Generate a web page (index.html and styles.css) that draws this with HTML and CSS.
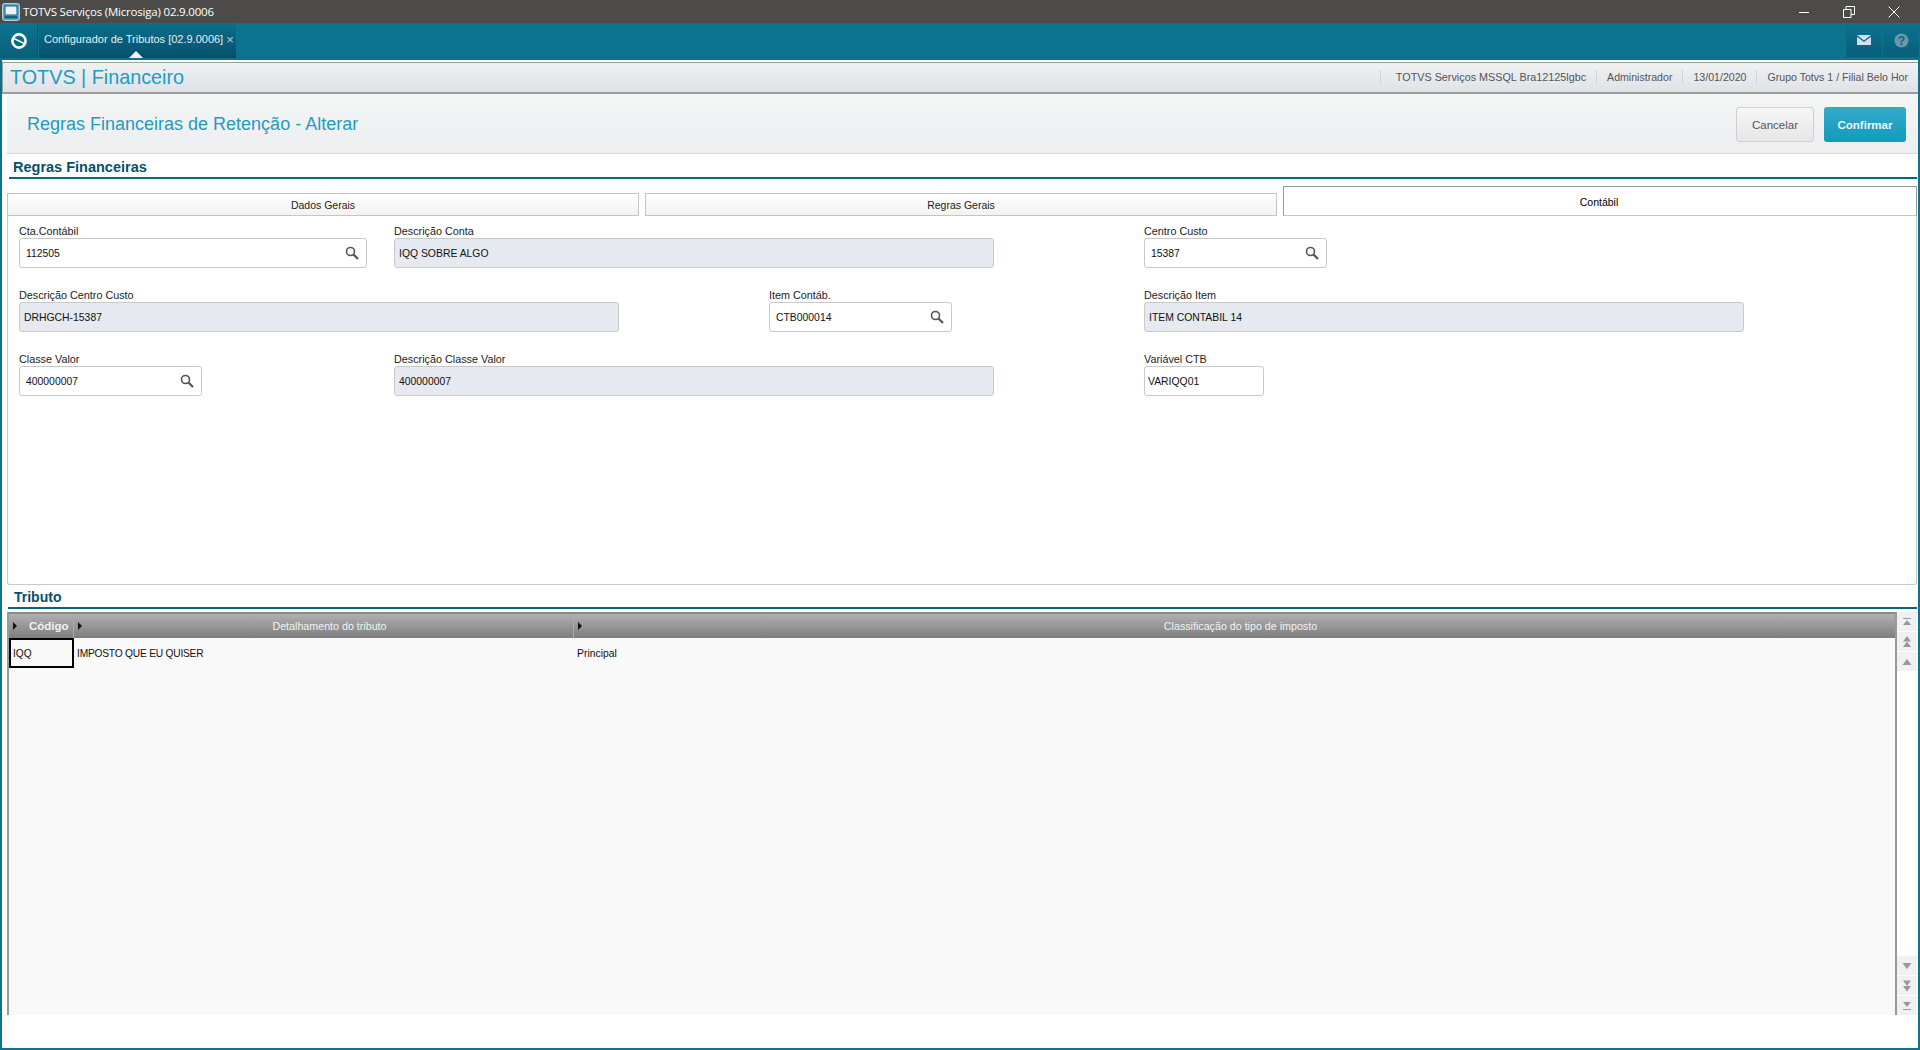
FILE: index.html
```html
<!DOCTYPE html>
<html lang="pt-BR">
<head>
<meta charset="utf-8">
<title>TOTVS Serviços (Microsiga) 02.9.0006</title>
<link rel="stylesheet" href="styles.css">
</head>
<body>
<div class="window">
  <header class="titlebar">
    <div class="title-left">
      <svg class="app-icon" width="18" height="18" viewBox="0 0 18 18"><rect x=".5" y=".5" width="17" height="17" rx="2" fill="#5fa9c4" stroke="#a9d3e0"/><rect x="3" y="3" width="12" height="9" fill="#e8f2f6" stroke="#1d5f7a"/><rect x="2.5" y="13" width="13" height="2.5" fill="#1d5f7a"/></svg>
      <span>TOTVS Serviços (Microsiga) 02.9.0006</span>
    </div>
    <div class="win-controls">
      <svg width="12" height="12" viewBox="0 0 12 12"><path d="M1 6.500h10" stroke="#fff" fill="none"/></svg>
      <svg width="12" height="12" viewBox="0 0 12 12"><path d="M.5 3.500h7.500v8h-7.500zM3 3.500v-3h8.500v8h-3.500" stroke="#fff" fill="none"/></svg>
      <svg width="12" height="12" viewBox="0 0 12 12"><path d="M.5.500l11 11M11.500.500l-11 11" stroke="#fff" fill="none"/></svg>
    </div>
  </header>
  <nav class="tabbar">
    <div class="home-btn">
      <svg width="18" height="18" viewBox="0 0 18 18"><circle cx="9" cy="9" r="6.600" fill="none" stroke="#fff" stroke-width="2.600"/><path d="M4 6.500l10 5" stroke="#fff" stroke-width="1.500"/></svg>
    </div>
    <div class="app-tab">
      <span>Configurador de Tributos [02.9.0006]</span><span class="tab-close">×</span>
      <i class="tab-caret"></i>
    </div>
    <div class="tabbar-right">
      <div class="bar-btn"><svg width="14" height="10" viewBox="0 0 14 10"><path d="M0 0h14L7 5.500z" fill="#d5e3e9"/><path d="M0 1.800l7 5.200 7-5.200V10H0z" fill="#d5e3e9"/></svg></div>
      <div class="bar-btn"><svg width="15" height="15" viewBox="0 0 15 15"><circle cx="7.500" cy="7.500" r="7" fill="#6e97a9"/><text x="7.500" y="11.500" class="help-mark" text-anchor="middle">?</text></svg></div>
    </div>
  </nav>
  <div class="content">
    <div class="module-bar">
      <div class="module-name">TOTVS | Financeiro</div>
      <ul class="module-info">
        <li>TOTVS Serviços MSSQL Bra12125lgbc</li>
        <li>Administrador</li>
        <li>13/01/2020</li>
        <li>Grupo Totvs 1 / Filial Belo Hor</li>
      </ul>
    </div>
    <div class="page-head">
      <h1>Regras Financeiras de Retenção - Alterar</h1>
      <div class="actions">
        <button class="btn btn-cancel">Cancelar</button>
        <button class="btn btn-confirm">Confirmar</button>
      </div>
    </div>
    <h2 class="section-title first">Regras Financeiras</h2>
    <div class="tabs">
      <div class="tab">Dados Gerais</div>
      <div class="tab">Regras Gerais</div>
      <div class="tab active">Contábil</div>
    </div>
    <section class="panel">
      <div class="form-grid">
        <div class="field"><label>Cta.Contábil</label><div class="input w348"><span>112505</span><svg class="lens" viewBox="0 0 14 14"><circle cx="5.500" cy="5.500" r="4" fill="none" stroke="#555" stroke-width="1.600"/><path d="M8.500 8.500l4.500 4.500" stroke="#555" stroke-width="2.200"/></svg></div></div>
        <div class="field span2"><label>Descrição Conta</label><div class="input ro w600"><span>IQQ SOBRE ALGO</span></div></div>
        <div class="field"><label>Centro Custo</label><div class="input w183"><span>15387</span><svg class="lens" viewBox="0 0 14 14"><circle cx="5.500" cy="5.500" r="4" fill="none" stroke="#555" stroke-width="1.600"/><path d="M8.500 8.500l4.500 4.500" stroke="#555" stroke-width="2.200"/></svg></div></div>

        <div class="field span2"><label>Descrição Centro Custo</label><div class="input ro w600"><span>DRHGCH-15387</span></div></div>
        <div class="field"><label>Item Contáb.</label><div class="input w183"><span>CTB000014</span><svg class="lens" viewBox="0 0 14 14"><circle cx="5.500" cy="5.500" r="4" fill="none" stroke="#555" stroke-width="1.600"/><path d="M8.500 8.500l4.500 4.500" stroke="#555" stroke-width="2.200"/></svg></div></div>
        <div class="field"><label>Descrição Item</label><div class="input ro w600"><span>ITEM CONTABIL 14</span></div></div>

        <div class="field"><label>Classe Valor</label><div class="input w183"><span>400000007</span><svg class="lens" viewBox="0 0 14 14"><circle cx="5.500" cy="5.500" r="4" fill="none" stroke="#555" stroke-width="1.600"/><path d="M8.500 8.500l4.500 4.500" stroke="#555" stroke-width="2.200"/></svg></div></div>
        <div class="field span2"><label>Descrição Classe Valor</label><div class="input ro w600"><span>400000007</span></div></div>
        <div class="field"><label>Variável CTB</label><div class="input plain w120"><span>VARIQQ01</span></div></div>
      </div>
    </section>
    <h2 class="section-title second">Tributo</h2>
    <div class="grid-box">
      <div class="grid-main">
        <div class="grid-head">
          <div class="th th-code"><i class="arrow"></i><span>Código</span></div>
          <div class="th th-desc"><i class="arrow"></i><span>Detalhamento do tributo</span></div>
          <div class="th th-class"><i class="arrow"></i><span>Classificação do tipo de imposto</span></div>
        </div>
        <div class="grid-row">
          <div class="td td-code">IQQ</div>
          <div class="td td-desc">IMPOSTO QUE EU QUISER</div>
          <div class="td td-class">Principal</div>
        </div>
      </div>
      <div class="scrollbar">
        <div class="scroll-group">
          <div class="sbtn"><svg width="12" height="10" viewBox="0 0 12 10"><path d="M2 1h8v1H2zM6 3l4 5H2z" fill="#999"/></svg></div>
          <div class="sbtn"><svg width="12" height="12" viewBox="0 0 12 12"><path d="M6 0l4 5.500H2zM6 5.500l4 5.500H2z" fill="#999"/></svg></div>
          <div class="sbtn"><svg width="12" height="8" viewBox="0 0 12 8"><path d="M6 1l4.500 6h-9z" fill="#999"/></svg></div>
        </div>
        <div class="scroll-group">
          <div class="sbtn"><svg width="12" height="8" viewBox="0 0 12 8"><path d="M6 7L1.500 1h9z" fill="#999"/></svg></div>
          <div class="sbtn"><svg width="12" height="12" viewBox="0 0 12 12"><path d="M6 6L2 .5h8zM6 11.500L2 6h8z" fill="#999"/></svg></div>
          <div class="sbtn"><svg width="12" height="10" viewBox="0 0 12 10"><path d="M6 6L2 1h8zM2 8h8v1H2z" fill="#999"/></svg></div>
        </div>
      </div>
    </div>
  </div>
</div>
</body>
</html>
```
FILE: styles.css
```css
* { box-sizing: border-box; }
html, body { margin: 0; padding: 0; height: 100%; overflow: hidden; }
body { font-family: "Liberation Sans", Arial, sans-serif; font-size: 11px; color: #111; background: #fff; }
.window { height: 1050px; display: flex; flex-direction: column; }

.titlebar { height: 23px; background: #4d4b49; color: #fff; display: flex; justify-content: space-between; align-items: center; flex: none; }
.title-left { display: flex; align-items: center; gap: 3px; padding-left: 2px; font-size: 11.500px; font-family: "Open Sans", "Liberation Sans", sans-serif; letter-spacing: -.2px; }
.app-icon { display: block; }
.win-controls { display: flex; align-items: center; gap: 33px; padding-right: 20px; }
.win-controls svg { display: block; }

.tabbar { height: 37px; background: #0b7290; display: flex; flex: none; align-items: stretch; }
.home-btn { width: 38px; height: 35px; background: linear-gradient(#0c7391, #095f79); border-right: 1px solid #0a5a72; display: flex; align-items: center; justify-content: center; }
.app-tab { position: relative; width: 197px; height: 35px; margin-left: 1px; background: linear-gradient(#0b6f8c, #06506a); color: #e4eef2; font-size: 11px; display: flex; align-items: center; padding: 0 0 3px 5px; white-space: nowrap; }
.tab-close { margin-left: 3px; color: #b9cdd6; font-size: 13px; }
.tab-caret { position: absolute; left: 90px; bottom: 0; border-left: 7px solid transparent; border-right: 7px solid transparent; border-bottom: 7px solid #f0f2f4; }
.tabbar-right { margin-left: auto; display: flex; gap: 1px; padding-right: 1px; }
.bar-btn { width: 36px; height: 34px; background: linear-gradient(#0b7290, #095f79); display: flex; align-items: center; justify-content: center; }
.bar-btn svg { display: block; }
.help-mark { font: bold 12px "Liberation Sans", sans-serif; fill: #0b6581; }

.content { flex: 1; min-height: 0; display: flex; flex-direction: column; border: 2px solid #0b7290; border-top: 0; padding-top: 2px; background: #fff; }

.module-bar { height: 32px; flex: none; display: flex; justify-content: space-between; align-items: center; background: linear-gradient(#eff1f3, #dfe2e7); border: 1px solid #9c9c9c; border-width: 1px 0 2px 1px; }
.module-name { font-size: 19.800px; color: #1d9cc2; padding-left: 7px; }
.module-info { display: flex; list-style: none; margin: 0 0 1px; padding: 0 10px 0 0; font-size: 10.600px; color: #555; }
.module-info li { padding: 0 10px; border-left: 1px solid #cfd3d8; line-height: 14px; white-space: nowrap; }
.module-info li:first-child { padding-left: 15px; font-size: 10.800px; }
.module-info li:last-child { padding-right: 0; }

.page-head { height: 60px; flex: none; margin-left: 5px; display: flex; justify-content: space-between; align-items: center; background: linear-gradient(#f4f5f5, #eceeef); border-bottom: 1px solid #d8d8d8; padding: 0 12px 0 20px; }
.page-head h1 { margin: 2px 0 0; font-weight: normal; font-size: 18px; color: #1d9cc2; }
.actions { display: flex; gap: 10px; margin-top: 2px; }
.btn { height: 35px; border-radius: 3px; font: 11.500px "Liberation Sans", sans-serif; padding: 0; }
.btn-cancel { width: 78px; color: #555; background: linear-gradient(#f6f6f6, #e6e6e6); border: 1px solid #cfcfcf; }
.btn-confirm { width: 82px; color: #eef7fa; font-weight: bold; background: linear-gradient(#35aac8, #129bbd); border: 0; }

.section-title { margin: 0; flex: none; font-size: 14.500px; font-weight: bold; color: #06506a; border-bottom: 2px solid #06677f; margin-right: 1px; }
.section-title.first { height: 25px; margin-left: 7px; padding: 4px 0 0 4px; line-height: 18px; }
.section-title.second { height: 24px; margin-left: 6px; padding: 3px 0 0 6px; line-height: 18px; font-size: 14px; }

.tabs { height: 37px; margin: 0 1px 0 5px; flex: none; display: flex; align-items: flex-end; gap: 6px; }
.tab { flex: 1 1 0; height: 23px; text-align: center; line-height: 23px; font-size: 10.500px; color: #222; background: linear-gradient(#fff, #f2f2f2); border: 1px solid #c4c4c4; }
.tab.active { height: 30px; background: #fff; color: #000; line-height: 31px; padding-right: 2px; border: 1px solid #999; border-bottom-color: #c4c4c4; }

.panel { flex: none; height: 369px; margin: 0 1px 0 5px; border: 1px solid #c8c8c8; border-top: 0; border-radius: 0 0 3px 3px; padding: 9px 0 0 11px; }
.form-grid { display: grid; grid-template-columns: repeat(4, 375px); grid-auto-rows: 64px; }
.span2 { grid-column: span 2; }
.field label { display: block; font-size: 10.800px; line-height: 12px; margin-bottom: 1px; color: #222; }
.input { height: 30px; border: 1px solid #c9c9c9; border-radius: 3px; background: #fff; display: flex; align-items: center; justify-content: space-between; font-size: 10.400px; padding: 0 7px 0 6px; color: #111; }
.input.ro { background: #e6e9f0; padding-left: 4px; }
.input.plain { padding-left: 3px; }
.w348 { width: 348px; }
.w600 { width: 600px; }
.w183 { width: 183px; }
.w120 { width: 120px; }
.lens { width: 14px; height: 14px; display: block; margin-right: 0; }

.grid-box { flex: none; height: 403px; margin: 3px 1px 0 5px; display: flex; align-items: stretch; }
.grid-main { flex: 1; min-width: 0; background: #f9f9f9; border-left: 2px solid #999; border-right: 2px solid #999; }
.grid-head { height: 26px; display: flex; background: linear-gradient(#b0b0b0, #7e7e7e); border-top: 2px solid #8a8a8a; color: #f2f2f2; font-size: 10.700px; }
.th { position: relative; display: flex; align-items: center; justify-content: center; border-right: 1px solid #ababab; }
.th-code { width: 65px; font-size: 11.500px; font-weight: bold; padding-left: 20px; justify-content: flex-start; }
.th-desc { width: 500px; padding-left: 12px; }
.th-class { flex: 1; padding-left: 12px; border-right: 0; }
.arrow { position: absolute; left: 4px; top: 8px; border-left: 4px solid #111; border-top: 4px solid transparent; border-bottom: 4px solid transparent; }
.grid-row { display: flex; height: 30px; font-size: 10.200px; line-height: 32px; color: #111; }
.td { padding-left: 3px; }
.td-code { width: 65px; border: 2px solid #000; line-height: 28px; padding-left: 2px; }
.td-desc { width: 500px; letter-spacing: -.2px; }
.td-class { flex: 1; font-size: 10.400px; }

.scrollbar { width: 20px; flex: none; display: flex; flex-direction: column; justify-content: space-between; }
.scroll-group { display: flex; flex-direction: column; gap: 1px; }
.sbtn { height: 19px; background: #f0f1f3; display: flex; align-items: center; justify-content: center; }
.sbtn svg { display: block; }
```
